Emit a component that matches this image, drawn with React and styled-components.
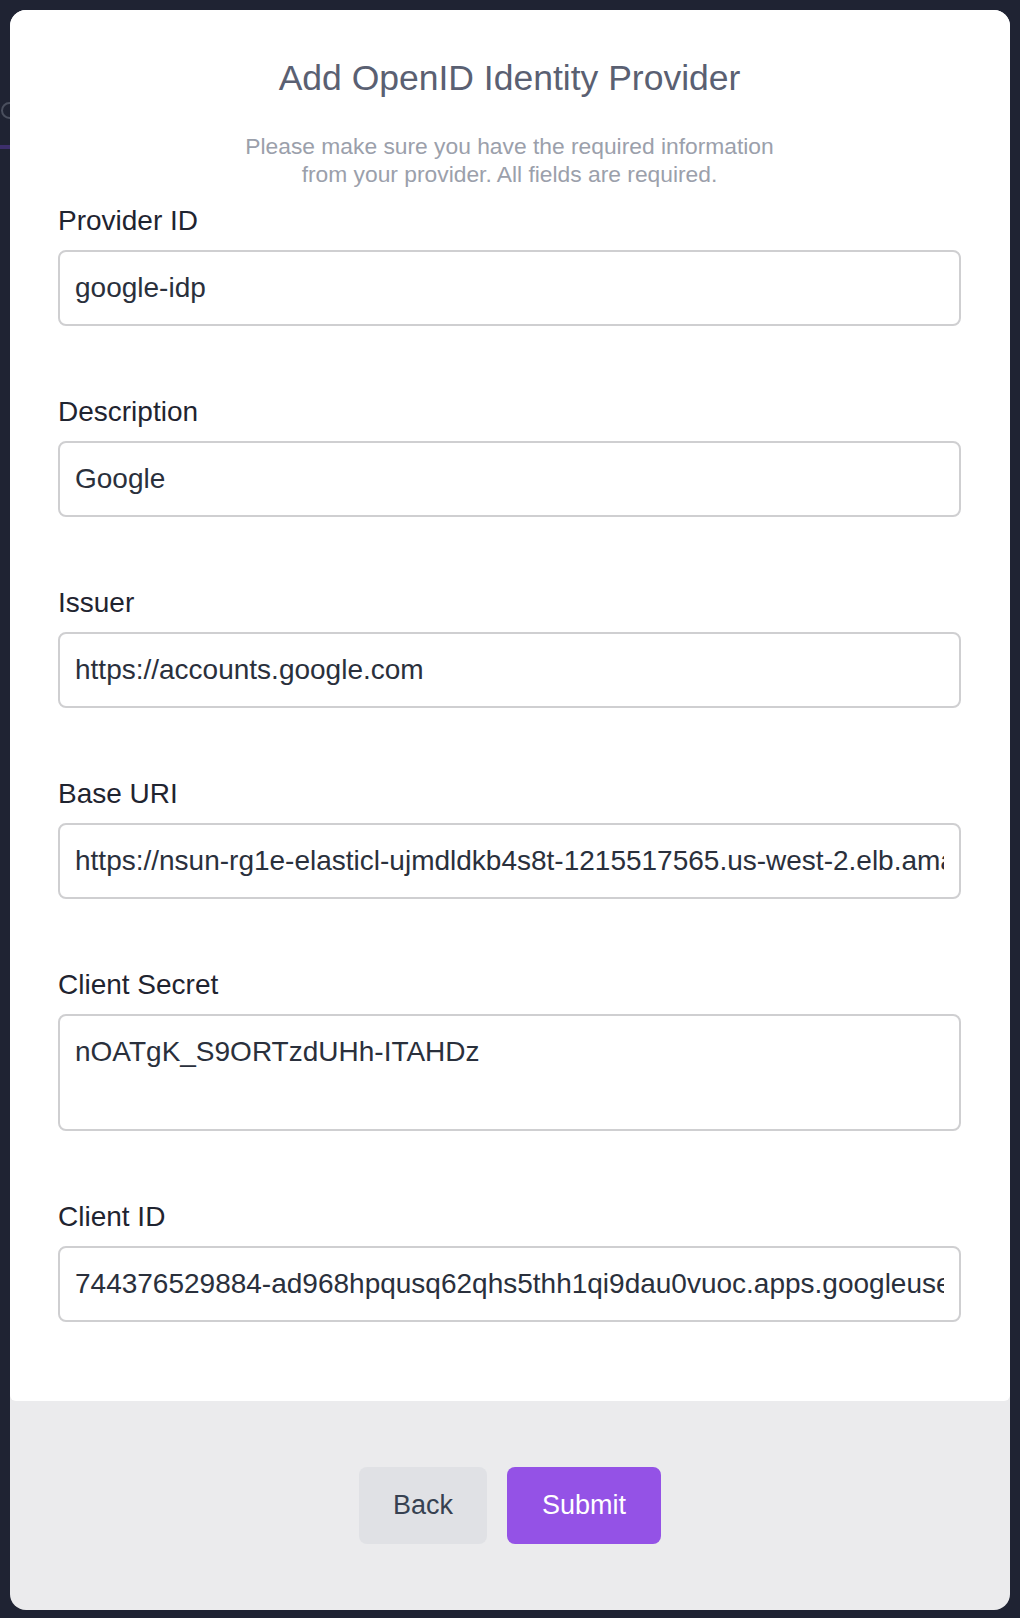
import styled, { createGlobalStyle } from "styled-components";

const GlobalStyle = createGlobalStyle`
  html, body {
    margin: 0;
    padding: 0;
    background-color: #1f2333;
  }
  body {
    font-family: "Liberation Sans", Arial, Helvetica, sans-serif;
  }
  * {
    box-sizing: border-box;
  }
`;

const fields = [
  { label: "Provider ID", value: "google-idp" },
  { label: "Description", value: "Google" },
  { label: "Issuer", value: "https://accounts.google.com" },
  {
    label: "Base URI",
    value:
      "https://nsun-rg1e-elasticl-ujmdldkb4s8t-1215517565.us-west-2.elb.amazonaws.com",
  },
  { label: "Client Secret", value: "nOATgK_S9ORTzdUHh-ITAHDz", multiline: true },
  {
    label: "Client ID",
    value:
      "744376529884-ad968hpqusq62qhs5thh1qi9dau0vuoc.apps.googleusercontent.com",
  },
];

function App() {
  return (
    <>
      <GlobalStyle />
      <Page>
        <Behind>
          <div className="ring"></div>
          <div className="line"></div>
        </Behind>
        <Modal>
          <Body>
            <Title>Add OpenID Identity Provider</Title>
            <Subtitle>
              Please make sure you have the required information
              <br />
              from your provider. All fields are required.
            </Subtitle>
            <Form>
              {fields.map((f) => (
                <Field key={f.label}>
                  <Label>{f.label}</Label>
                  {f.multiline ? (
                    <TextArea readOnly defaultValue={f.value} />
                  ) : (
                    <Input readOnly defaultValue={f.value} />
                  )}
                </Field>
              ))}
            </Form>
          </Body>
          <Footer>
            <Button>Back</Button>
            <Button $primary>Submit</Button>
          </Footer>
        </Modal>
      </Page>
    </>
  );
}

const Page = styled.div`
  position: relative;
  padding: 10px;
  min-height: 1618px;
  overflow: hidden;
`;

// faint bits of the page behind the overlay
const Behind = styled.div`
  position: absolute;
  top: 0;
  left: 0;
  width: 10px;
  height: 160px;
  overflow: hidden;
  .ring {
    position: absolute;
    top: 102px;
    left: 1px;
    width: 17px;
    height: 17px;
    border: 2px solid #4a4f5e;
    border-radius: 50%;
  }
  .line {
    position: absolute;
    top: 145px;
    left: 0;
    width: 10px;
    height: 4px;
    background-color: #3d2f6c;
  }
`;

const Modal = styled.div`
  position: relative;
  width: 1000px;
  height: 1600px;
  display: flex;
  flex-direction: column;
  border-radius: 16px;
  overflow: hidden;
  background-color: #ebebed;
`;

const Body = styled.div`
  background-color: #ffffff;
  padding: 48px 49px 79px 48px;
  display: flex;
  flex-direction: column;
  border-radius: 0 0 6px 6px;
`;

const Title = styled.h2`
  margin: 0;
  text-align: center;
  font-size: 35.5px;
  line-height: 41px;
  font-weight: 400;
  color: #5a6072;
`;

const Subtitle = styled.p`
  margin: 33px 0 14px;
  text-align: center;
  font-size: 22.8px;
  line-height: 28px;
  color: #9ba0ab;
`;

const Form = styled.div`
  display: flex;
  flex-direction: column;
  gap: 67px;
`;

const Field = styled.div`
  display: flex;
  flex-direction: column;
  gap: 10px;
`;

const Label = styled.label`
  font-size: 28px;
  line-height: 38px;
  color: #1f2430;
`;

const Input = styled.input`
  width: 100%;
  height: 76px;
  padding: 0 15px;
  border: 2px solid #cfcfd1;
  border-radius: 8px;
  font-family: inherit;
  font-size: 28px;
  color: #2a303c;
  background-color: #ffffff;
  outline: none;
`;

const TextArea = styled.textarea`
  width: 100%;
  height: 117px;
  padding: 19px 15px;
  border: 2px solid #cfcfd1;
  border-radius: 8px;
  font-family: inherit;
  font-size: 28px;
  line-height: 34px;
  color: #2a303c;
  background-color: #ffffff;
  resize: none;
  outline: none;
  display: block;
`;

const Footer = styled.div`
  flex: 1;
  display: flex;
  align-items: center;
  justify-content: center;
  gap: 20px;
`;

const Button = styled.button`
  height: 77px;
  padding: 0 ${(p) => (p.$primary ? "35px" : "34px")};
  border: none;
  border-radius: 8px;
  font-family: inherit;
  font-size: 27px;
  cursor: pointer;
  background-color: ${(p) => (p.$primary ? "#9452e6" : "#e0e1e5")};
  color: ${(p) => (p.$primary ? "#ffffff" : "#374151")};
`;

export default App;
